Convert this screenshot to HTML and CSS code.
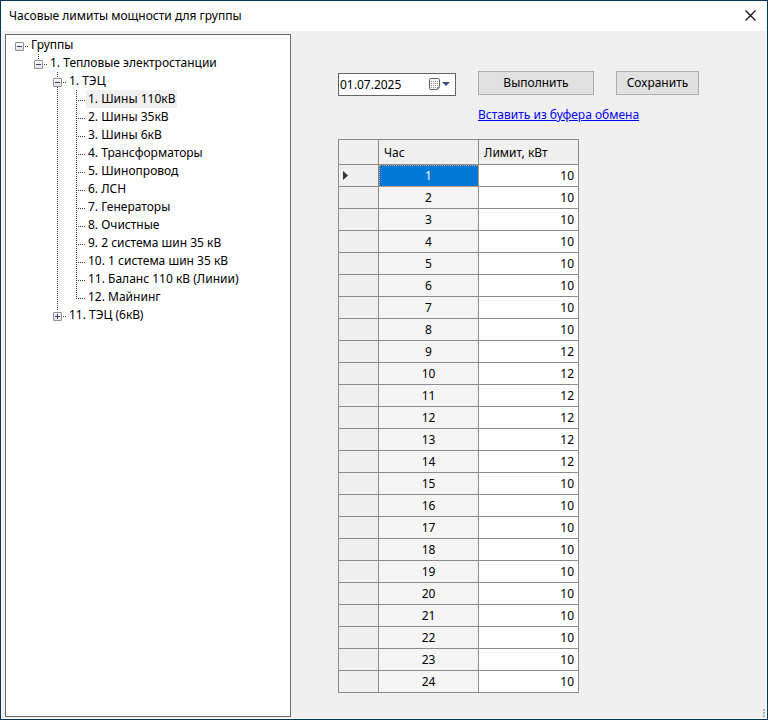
FILE: index.html
```html
<!DOCTYPE html>
<html lang="ru">
<head>
<meta charset="utf-8">
<meta name="viewport" content="width=device-width, initial-scale=1">
<title>Часовые лимиты мощности для группы</title>
<link rel="stylesheet" href="styles.css">
</head>
<body>
<div class="window">
  <header class="titlebar">
    <h1 class="title">Часовые лимиты мощности для группы</h1>
    <button class="close" type="button" aria-label="Закрыть">
      <svg width="11" height="11" viewBox="0 0 11 11" aria-hidden="true"><path d="M.5 .5l10 10M10.5 .5l-10 10" fill="none" stroke="#111" stroke-width="1.2"/></svg>
    </button>
  </header>
  <main class="client">
    <nav class="tree" aria-label="Группы">
      <details open>
        <summary>Группы</summary>
        <div class="branch">
          <details open>
            <summary>1. Тепловые электростанции</summary>
            <div class="branch">
              <details class="has-next" open>
                <summary>1. ТЭЦ</summary>
                <ul class="branch leaves">
                  <li><span class="selected">1. Шины 110кВ</span></li>
                  <li><span>2. Шины 35кВ</span></li>
                  <li><span>3. Шины 6кВ</span></li>
                  <li><span>4. Трансформаторы</span></li>
                  <li><span>5. Шинопровод</span></li>
                  <li><span>6. ЛСН</span></li>
                  <li><span>7. Генераторы</span></li>
                  <li><span>8. Очистные</span></li>
                  <li><span>9. 2 система шин 35 кВ</span></li>
                  <li><span>10. 1 система шин 35 кВ</span></li>
                  <li><span>11. Баланс 110 кВ (Линии)</span></li>
                  <li><span>12. Майнинг</span></li>
                </ul>
              </details>
              <details>
                <summary>11. ТЭЦ (6кВ)</summary>
              </details>
            </div>
          </details>
        </div>
      </details>
    </nav>
    <section class="content">
      <form class="toolbar">
        <div class="date">
          <input class="date-text" type="text" value="01.07.2025" aria-label="Дата">
          <button class="date-drop" type="button" aria-label="Открыть календарь">
            <svg width="21" height="13" viewBox="0 0 21 13" aria-hidden="true">
              <path d="M1.500 .5h8q1 0 1 1v7l-3 3h-6q-1 0-1-1v-9q0-1 1-1z" fill="#f4f4f4" stroke="#6a6260"/>
              <path d="M2 3.500h7M2 5.500h7M2 7.500h7M2 9.500h5" stroke="#94949c" stroke-dasharray="1 1"/>
              <path d="M10.500 9.500h-2v2z" fill="#fff" stroke="#6a6260" stroke-width=".8"/>
              <path d="M13 4h8l-4 4z" fill="#3d5080"/>
            </svg>
          </button>
        </div>
        <button class="btn" type="button">Выполнить</button>
        <button class="btn" type="button">Сохранить</button>
        <a class="paste" href="#">Вставить из буфера обмена</a>
      </form>
      <table class="limits">
        <thead>
          <tr><td></td><th scope="col">Час</th><th scope="col">Лимит, кВт</th></tr>
        </thead>
        <tbody>
          <tr class="current"><td><svg class="marker" width="5" height="9" viewBox="0 0 5 9" aria-hidden="true"><path d="M0 0l5 4.500l-5 4.500z" fill="#333"/></svg></td><td>1</td><td>10</td></tr>
          <tr><td></td><td>2</td><td>10</td></tr>
          <tr><td></td><td>3</td><td>10</td></tr>
          <tr><td></td><td>4</td><td>10</td></tr>
          <tr><td></td><td>5</td><td>10</td></tr>
          <tr><td></td><td>6</td><td>10</td></tr>
          <tr><td></td><td>7</td><td>10</td></tr>
          <tr><td></td><td>8</td><td>10</td></tr>
          <tr><td></td><td>9</td><td>12</td></tr>
          <tr><td></td><td>10</td><td>12</td></tr>
          <tr><td></td><td>11</td><td>12</td></tr>
          <tr><td></td><td>12</td><td>12</td></tr>
          <tr><td></td><td>13</td><td>12</td></tr>
          <tr><td></td><td>14</td><td>12</td></tr>
          <tr><td></td><td>15</td><td>10</td></tr>
          <tr><td></td><td>16</td><td>10</td></tr>
          <tr><td></td><td>17</td><td>10</td></tr>
          <tr><td></td><td>18</td><td>10</td></tr>
          <tr><td></td><td>19</td><td>10</td></tr>
          <tr><td></td><td>20</td><td>10</td></tr>
          <tr><td></td><td>21</td><td>10</td></tr>
          <tr><td></td><td>22</td><td>10</td></tr>
          <tr><td></td><td>23</td><td>10</td></tr>
          <tr><td></td><td>24</td><td>10</td></tr>
        </tbody>
      </table>
    </section>
  </main>
  <svg class="grip" width="2" height="8" viewBox="0 0 2 8" aria-hidden="true"><path d="M0 0h2v2h-2zM0 3h2v2h-2zM0 6h2v2h-2z" fill="#b0b0b0"/></svg>
</div>
</body>
</html>
```
FILE: styles.css
```css
* {
  box-sizing: border-box;
}

body {
  margin: 0;
  font: 12px/18px "Noto Sans", "Open Sans", sans-serif;
  color: #000;
}

button,
input {
  font: inherit;
  color: inherit;
}

.window {
  position: relative;
  display: flex;
  flex-direction: column;
  min-height: 100vh;
  border: 1px solid #06355a;
  background: #fff;
}

.titlebar {
  display: flex;
  align-items: center;
  justify-content: space-between;
  height: 30px;
  padding: 0 11px 2px 8px;
}

.title {
  margin: 2px 0 0;
  font-size: 12px;
  font-weight: 400;
}

.close {
  display: flex;
  padding: 0;
  border: 0;
  background: none;
}

.client {
  flex: 1;
  display: grid;
  grid-template-columns: 286px 1fr;
  margin: 0 1px 1px;
  padding: 3px 3px 1px;
  background: #f0f0f0;
}

/* Tree */
.tree {
  padding: 1px 0 0 8px;
  border: 1px solid #646c78;
  background: #fff;
}

.tree summary {
  position: relative;
  height: 18px;
  padding-left: 17px;
  list-style: none;
  white-space: nowrap;
}

.tree summary::before {
  content: "";
  position: absolute;
  left: 1px;
  top: 6px;
  box-sizing: border-box;
  width: 9px;
  height: 9px;
  border: 1px solid #919191;
  border-radius: 1px;
  background:
    linear-gradient(#27418f, #27418f) 1px 3px / 5px 1px no-repeat,
    linear-gradient(#fff, #e4e4e4);
}

.tree details:not([open]) > summary::before {
  background:
    linear-gradient(#27418f, #27418f) 1px 3px / 5px 1px no-repeat,
    linear-gradient(#27418f, #27418f) 3px 1px / 1px 5px no-repeat,
    linear-gradient(#fff, #e4e4e4);
}

.tree summary::after {
  content: "";
  position: absolute;
  left: 11px;
  top: 10px;
  width: 3px;
  height: 1px;
  background: repeating-linear-gradient(90deg, #333 0 1px, transparent 1px 2px);
}

.branch {
  position: relative;
  margin: 0;
  padding: 0 0 0 19px;
  list-style: none;
}

/* Dotted connector from a parent down to its first child */
.branch::before {
  content: "";
  position: absolute;
  left: 24px;
  top: 0;
  width: 1px;
  height: 5px;
  background: repeating-linear-gradient(#333 0 1px, transparent 1px 2px);
}

.leaves::before {
  height: auto;
  bottom: 7px;
}

.leaves li {
  position: relative;
  height: 18px;
  padding-left: 15px;
}

.leaves li::before {
  content: "";
  position: absolute;
  left: 7px;
  top: 10px;
  width: 7px;
  height: 1px;
  background: repeating-linear-gradient(90deg, #333 0 1px, transparent 1px 2px);
}

.leaves span {
  display: inline-block;
  padding: 0 2px;
}

.leaves .selected {
  background: #f0f0f0;
}

.has-next {
  position: relative;
}

.has-next::after {
  content: "";
  position: absolute;
  left: 5px;
  top: 15px;
  bottom: -5px;
  width: 1px;
  background: repeating-linear-gradient(#333 0 1px, transparent 1px 2px);
}

/* Right side */
.content {
  padding: 37px 20px 20px 47px;
}

.toolbar {
  display: grid;
  grid-template-columns: 118px 116px 83px;
  column-gap: 22px;
  row-gap: 10px;
  align-items: start;
}

.date {
  display: flex;
  align-items: center;
  height: 23px;
  margin-top: 2px;
  padding-right: 5px;
  border: 1px solid #646464;
  background: #fff;
}

.date-text {
  flex: 1;
  min-width: 0;
  padding: 0 1px;
  border: 0;
  background: none;
}

.date-drop {
  display: flex;
  padding: 0;
  border: 0;
  background: none;
}

.btn {
  height: 24px;
  padding: 0;
  border: 1px solid #adadad;
  background: #e1e1e1;
}

.paste {
  grid-column: 2 / -1;
  color: #00f;
}

.limits {
  margin-top: 15px;
  border-collapse: collapse;
  table-layout: fixed;
  width: 241px;
}

.limits th,
.limits td {
  height: 22px;
  padding: 0 4px;
  border: 1px solid #8c8c8c;
  line-height: 18px;
  text-align: right;
}

.limits thead > tr > * {
  height: 25px;
  padding: 2px 5px 0;
  font-weight: 400;
  text-align: left;
}

.limits tr > :first-child {
  width: 40px;
  text-align: left;
}

.limits tbody td:nth-child(2) {
  background: #f5f5f5;
  text-align: center;
}

.limits tbody td:nth-child(3) {
  background: #fff;
}

.limits tbody .current td:nth-child(2) {
  outline: 1px dotted #e0a868;
  outline-offset: -1px;
  background: #0078d7;
  color: #fff;
}

.marker {
  display: block;
}

.grip {
  position: absolute;
  right: 2px;
  bottom: 2px;
}
```
